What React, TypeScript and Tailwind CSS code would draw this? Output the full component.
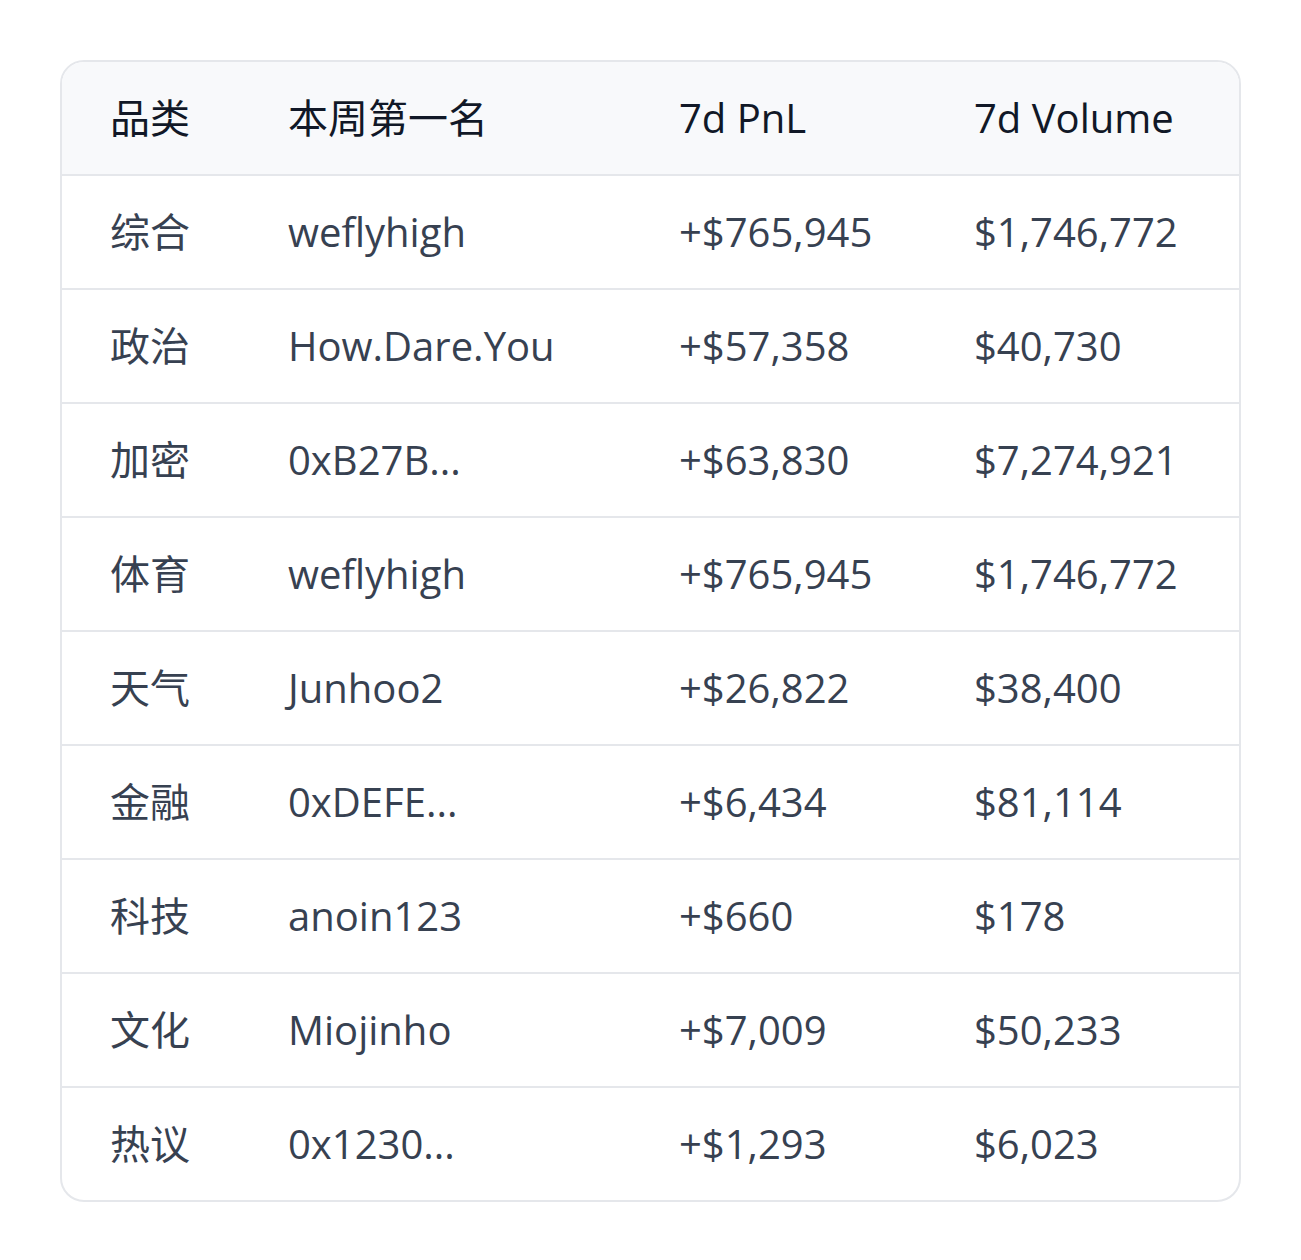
import React from "react";

const rows = [
  ["综合", "weflyhigh", "+$765,945", "$1,746,772"],
  ["政治", "How.Dare.You", "+$57,358", "$40,730"],
  ["加密", "0xB27B...", "+$63,830", "$7,274,921"],
  ["体育", "weflyhigh", "+$765,945", "$1,746,772"],
  ["天气", "Junhoo2", "+$26,822", "$38,400"],
  ["金融", "0xDEFE...", "+$6,434", "$81,114"],
  ["科技", "anoin123", "+$660", "$178"],
  ["文化", "Miojinho", "+$7,009", "$50,233"],
  ["热议", "0x1230...", "+$1,293", "$6,023"],
];

const cols = "grid grid-cols-[178px_391px_295px_313px]";

const App = () => {
  return (
    <div className="bg-white min-h-[1260px] p-[60px] font-['Open_Sans','Noto_Sans_CJK_SC',sans-serif]">
      <div className="w-[1181px] rounded-[24px] border-2 border-[#e5e7eb] overflow-hidden">
        {/* header */}
        <div className={`${cols} h-[114px] items-center bg-[#f8f9fb] border-b-2 border-[#e5e7eb] text-[40px] text-[#111827]`}>
          <div className="pl-[48px]">品类</div>
          <div className="pl-[48px]">本周第一名</div>
          <div className="pl-[48px]">7d PnL</div>
          <div className="pl-[48px]">7d Volume</div>
        </div>
        {rows.map((r, i) => (
          <div
            key={i}
            className={`${cols} items-center text-[40px] text-[#374151] ${i < rows.length - 1 ? "h-[114px] border-b-2 border-[#e5e7eb]" : "h-[112px]"}`}
          >
            {r.map((c, j) => (
              <div key={j} className="pl-[48px] whitespace-nowrap">
                {c}
              </div>
            ))}
          </div>
        ))}
      </div>
    </div>
  );
};

export default App;
